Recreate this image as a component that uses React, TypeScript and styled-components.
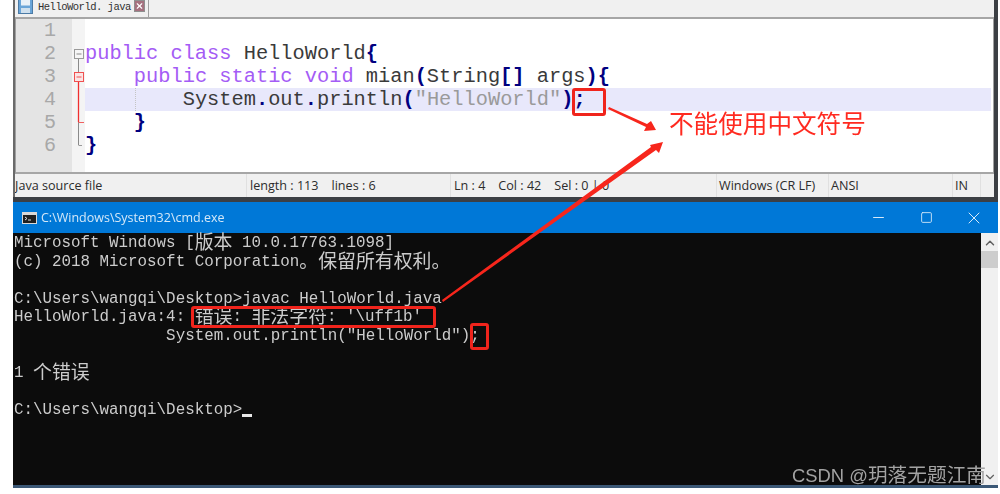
import React from "react";
import styled, { createGlobalStyle } from "styled-components";
import { ChevronDown, ChevronUp, Minus, Square, X } from "lucide-react";

const GlobalStyle = createGlobalStyle`
  html, body {
    margin: 0;
    padding: 0;
    background: #ffffff;
    overflow: hidden;
  }
`;

const MONO = `"Liberation Mono", "Noto Sans CJK SC", monospace`;
const UI = `"Open Sans", "Noto Sans", sans-serif`;
const CJK = `"Noto Sans CJK SC", sans-serif`;

const Page = styled.div`
  position: relative;
  width: 1000px;
  height: 494px;
  padding-left: 13px;
  box-sizing: border-box;
  overflow: hidden;
  filter: blur(0.45px);
`;

const Shot = styled.div`
  width: 985px;
  display: flex;
  flex-direction: column;
`;

/* notepad++ part */
const EditorWindow = styled.div`
  display: flex;
  flex-direction: column;
  height: 197px;
  background: #f0f0f0;
  border-left: 2px solid #6a6a6a;
  border-right: 4px solid #3c3f44;
`;

const TabBar = styled.div`
  display: flex;
  height: 17px;
  flex-shrink: 0;
  background: #f0f0f0;
`;

const Tab = styled.div`
  display: flex;
  align-items: center;
  width: 134px;
  height: 17px;
  padding-left: 3px;
  box-sizing: border-box;
  border-right: 1px solid #a0a0a0;
`;

const TabName = styled.span`
  margin-left: 5px;
  width: 96px;
  font-family: ${MONO};
  font-size: 10.5px;
  letter-spacing: -0.5px;
  color: #303030;
  line-height: 13px;
  margin-top: -3px;
`;

const TabClose = styled.div`
  display: flex;
  align-items: center;
  justify-content: center;
  width: 11px;
  height: 12px;
  margin-top: -5px;
  background: #a5717f;
  border: 1px solid #8f8f8f;
  box-sizing: border-box;
  color: #ffffff;
`;

const EditorFrame = styled.div`
  display: flex;
  height: 153px;
  flex-shrink: 0;
  background: #ffffff;
  border-top: 2px solid #a6a6a6;
  border-bottom: 2px solid #a6a6a6;
  border-left: 1px solid #a0a0a0;
  border-right: 1px solid #a0a0a0;
  box-sizing: content-box;
`;

const Gutter = styled.div`
  width: 56px;
  flex-shrink: 0;
  background: #e4e4e4;
`;

const LineNumber = styled.div`
  height: 23px;
  line-height: 23px;
  padding-right: 16px;
  text-align: right;
  font-family: ${MONO};
  font-size: 20px;
  color: #a8a8a8;
`;

const FoldMargin = styled.div`
  width: 13px;
  flex-shrink: 0;
  background: #f4f4f4;
`;

const CodeArea = styled.div`
  flex: 1;
  padding-right: 2px;
`;

const CodeLine = styled.div<{ $active?: boolean }>`
  position: relative;
  height: 23px;
  line-height: 23px;
  white-space: pre;
  font-family: ${MONO};
  font-size: 20.35px;
  color: #3a3a3a;
  background: ${(p) => (p.$active ? "#e8e8fb" : "transparent")};
`;

const IndentGuide = styled.span`
  position: absolute;
  left: 50px;
  top: 0;
  height: 23px;
  border-left: 1px dotted #c4c4c4;
`;

const Keyword = styled.span`
  color: #a45cf5;
`;

const Operator = styled.span`
  color: #000080;
  font-weight: bold;
`;

const StringText = styled.span`
  color: #9a9a9a;
`;

const StatusBar = styled.div`
  display: flex;
  flex: 1;
  font-family: ${UI};
  font-size: 12.6px;
  color: #2c2c2c;
  background: #f0f0f0;
`;

const StatusCell = styled.div<{ $width: number; $gap?: number; $inset?: number }>`
  display: flex;
  gap: ${(p) => p.$gap ?? 0}px;
  align-items: center;
  width: ${(p) => p.$width}px;
  flex-shrink: 0;
  box-sizing: border-box;
  padding-left: ${(p) => p.$inset ?? 3}px;
  white-space: pre;
  overflow: hidden;
  border-right: 1px solid #e0e0e0;
`;

/* cmd part */
const CmdWindow = styled.div`
  display: flex;
  flex-direction: column;
  margin-top: 5px;
  box-shadow: 0 -5px 0 #3c3f44;
`;

const TitleBar = styled.div`
  display: flex;
  align-items: center;
  height: 31px;
  padding-left: 9px;
  background: #0078d7;
`;

const TitleText = styled.span`
  margin-left: 4px;
  flex: 1;
  font-family: ${UI};
  font-size: 12.5px;
  color: #d4e8f8;
`;

const WindowButton = styled.div`
  display: flex;
  align-items: center;
  justify-content: center;
  width: 48px;
  height: 31px;
  color: #d9ebf9;
`;

const CmdBody = styled.div`
  display: flex;
  height: 252px;
  border-bottom: 3px solid #3b5876;
`;

const Console = styled.div`
  flex: 1;
  padding: 1px 0 0 1px;
  background: #0c0c0c;
  font-family: ${MONO};
  font-size: 15.85px;
  color: #cccccc;
`;

const ConsoleLine = styled.div`
  height: 18.6px;
  line-height: 18.6px;
  white-space: pre;
`;

const Han = styled.span`
  font-family: ${CJK};
  font-size: 18.9px;
  line-height: 0;
  vertical-align: -1.5px;
`;

const Cursor = styled.span`
  display: inline-block;
  width: 10px;
  height: 3px;
  background: #e8e8e8;
  vertical-align: -3px;
`;

const ScrollBar = styled.div`
  display: flex;
  flex-direction: column;
  width: 17px;
  padding-top: 1px;
  background: #f0f0f0;
  color: #606060;
`;

const ScrollButton = styled.div`
  display: flex;
  align-items: center;
  justify-content: center;
  height: 17px;
`;

const ScrollThumb = styled.div`
  height: 17px;
  background: #cdcdcd;
`;

const ScrollTrack = styled.div`
  flex: 1;
`;

/* things drawn on top of the screenshot */
const Marker = styled.div<{ $x: number; $y: number; $w: number; $h: number }>`
  position: absolute;
  left: ${(p) => p.$x}px;
  top: ${(p) => p.$y}px;
  width: ${(p) => p.$w}px;
  height: ${(p) => p.$h}px;
  box-sizing: border-box;
  border: 3px solid #f0241c;
  border-radius: 3px;
`;

const Note = styled.div`
  position: absolute;
  left: 669px;
  top: 104px;
  font-family: ${CJK};
  font-size: 24.6px;
  line-height: 36px;
  color: #ff2a20;
  white-space: nowrap;
`;

const Watermark = styled.div`
  position: absolute;
  left: 792px;
  top: 464px;
  font-family: "Liberation Sans", ${CJK};
  font-size: 18.4px;
  line-height: 24px;
  color: #a3a3a3;
  white-space: nowrap;
`;

const WatermarkHan = styled.span`
  font-family: ${CJK};
  font-size: 19.7px;
  line-height: 0;
`;

const Arrows = styled.svg`
  position: absolute;
  left: 0;
  top: 0;
  pointer-events: none;
`;

const SaveIcon = () => (
  <svg width="15" height="15" viewBox="0 0 15 15" style={{ marginTop: -5 }}>
    <rect x="0.5" y="0.5" width="14" height="14" fill="#6aa5d8" stroke="#4c7ba6" />
    <rect x="3" y="0.5" width="9" height="6" fill="#e9f1f8" />
    <rect x="3" y="9" width="9" height="5" fill="#cfe0ee" />
  </svg>
);

const FoldMarks = () => (
  <svg width="13" height="153" viewBox="0 0 13 153">
    <rect x="2.5" y="30.5" width="9" height="9" fill="#f6f6f6" stroke="#9a9a9a" />
    <line x1="4.5" y1="35" x2="9.5" y2="35" stroke="#8a8a8a" />
    <line x1="6.5" y1="40" x2="6.5" y2="53" stroke="#8a8a8a" />
    <line x1="6.5" y1="103" x2="6.5" y2="126" stroke="#8a8a8a" />
    <path d="M6.5 126.5H10" stroke="#9a9a9a" fill="none" />
    <rect x="2.5" y="53.5" width="9" height="9" fill="#fbe4e4" stroke="#f05050" />
    <line x1="4.5" y1="58" x2="9.5" y2="58" stroke="#f05050" />
    <line x1="6.5" y1="63" x2="6.5" y2="103" stroke="#f03030" strokeWidth="1.3" />
    <path d="M6.5 103.5H12" stroke="#f06060" fill="none" />
  </svg>
);

const CmdIcon = () => (
  <svg width="15" height="12" viewBox="0 0 15 12">
    <rect x="0" y="0" width="15" height="12" fill="#d8d8d8" />
    <rect x="1" y="3" width="13" height="8" fill="#202020" />
    <path d="M3 5l2 1.5L3 8M6 8h3" stroke="#e0e0e0" fill="none" />
  </svg>
);

const App = (): JSX.Element => {
  return (
    <Page>
      <GlobalStyle />
      <Shot>
        <EditorWindow>
          <TabBar>
            <Tab>
              <SaveIcon />
              <TabName>HelloWorld. java</TabName>
              <TabClose>
                <X size={10} strokeWidth={3} />
              </TabClose>
            </Tab>
          </TabBar>
          <EditorFrame>
            <Gutter>
              {[1, 2, 3, 4, 5, 6].map((n) => (
                <LineNumber key={n}>{n}</LineNumber>
              ))}
            </Gutter>
            <FoldMargin>
              <FoldMarks />
            </FoldMargin>
            <CodeArea>
              <CodeLine />
              <CodeLine>
                <Keyword>public class</Keyword> HelloWorld<Operator>{"{"}</Operator>
              </CodeLine>
              <CodeLine>
                {"    "}
                <Keyword>public static void</Keyword> mian<Operator>(</Operator>String
                <Operator>[]</Operator> args<Operator>){"{"}</Operator>
              </CodeLine>
              <CodeLine $active>
                <IndentGuide />
                {"        "}System<Operator>.</Operator>out<Operator>.</Operator>println
                <Operator>(</Operator>
                <StringText>"HelloWorld"</StringText>
                <Operator>);</Operator>
              </CodeLine>
              <CodeLine>
                {"    "}
                <Operator>{"}"}</Operator>
              </CodeLine>
              <CodeLine>
                <Operator>{"}"}</Operator>
              </CodeLine>
            </CodeArea>
          </EditorFrame>
          <StatusBar>
            <StatusCell $width={232} $inset={0}>Java source file</StatusCell>
            <StatusCell $width={204} $gap={13}>
              <span>length : 113</span>
              <span>lines : 6</span>
            </StatusCell>
            <StatusCell $width={266} $gap={13}>
              <span>Ln : 4</span>
              <span>Col : 42</span>
              <span>Sel : 0 | 0</span>
            </StatusCell>
            <StatusCell $width={112} $inset={2}>Windows (CR LF)</StatusCell>
            <StatusCell $width={124} $inset={2}>ANSI</StatusCell>
            <StatusCell $width={28} $inset={2}>IN</StatusCell>
          </StatusBar>
        </EditorWindow>
        <CmdWindow>
          <TitleBar>
            <CmdIcon />
            <TitleText>C:\Windows\System32\cmd.exe</TitleText>
            <WindowButton>
              <Minus size={17} strokeWidth={1.4} />
            </WindowButton>
            <WindowButton>
              <Square size={13} strokeWidth={1.6} />
            </WindowButton>
            <WindowButton>
              <X size={20} strokeWidth={1.2} />
            </WindowButton>
          </TitleBar>
          <CmdBody>
            <Console>
              <ConsoleLine>
                Microsoft Windows [<Han>版本</Han> 10.0.17763.1098]
              </ConsoleLine>
              <ConsoleLine>
                (c) 2018 Microsoft Corporation<Han>。保留所有权利。</Han>
              </ConsoleLine>
              <ConsoleLine />
              <ConsoleLine>C:\Users\wangqi\Desktop&gt;javac HelloWorld.java</ConsoleLine>
              <ConsoleLine>
                HelloWorld.java:4: <Han>错误</Han>: <Han>非法字符</Han>: '\uff1b'
              </ConsoleLine>
              <ConsoleLine>{'                System.out.println("HelloWorld");'}</ConsoleLine>
              <ConsoleLine />
              <ConsoleLine>
                1 <Han>个错误</Han>
              </ConsoleLine>
              <ConsoleLine />
              <ConsoleLine>
                C:\Users\wangqi\Desktop&gt;
                <Cursor />
              </ConsoleLine>
            </Console>
            <ScrollBar>
              <ScrollButton>
                <ChevronUp size={14} strokeWidth={2.5} />
              </ScrollButton>
              <ScrollThumb />
              <ScrollTrack />
              <ScrollButton>
                <ChevronDown size={14} strokeWidth={2} />
              </ScrollButton>
            </ScrollBar>
          </CmdBody>
        </CmdWindow>
      </Shot>

      <Marker $x={572} $y={88} $w={34} $h={28} />
      <Marker $x={191} $y={306} $w={245} $h={22} />
      <Marker $x={470} $y={323} $w={19} $h={27} />
      <Arrows width="1000" height="494" viewBox="0 0 1000 494">
        <polygon points="609,107 647,124 651,121 656,130 644,131 646,127 608,109" fill="#f7261c" />
        <polygon points="442,300 651,147 650,145 663,142 659,153 656,150 443,302" fill="#f7261c" />
      </Arrows>
      <Note>不能使用中文符号</Note>
      <Watermark>
        CSDN @<WatermarkHan>玥落无题江南</WatermarkHan>
      </Watermark>
    </Page>
  );
};

export default App;
